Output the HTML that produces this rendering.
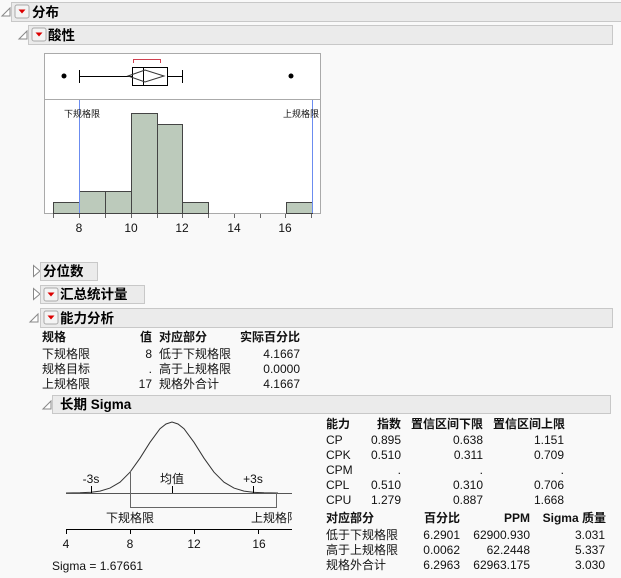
<!DOCTYPE html>
<html><head><meta charset="utf-8"><style>
html,body{margin:0;padding:0;background:#f9f9f9;width:621px;height:578px;overflow:hidden}
svg{display:block}
text{font-family:"Liberation Sans","Noto Sans CJK SC",sans-serif;font-size:12px;fill:#111}
.h{font-size:13.5px;font-weight:bold;fill:#000}
.b{font-weight:bold}
.s{font-size:9px}
</style></head><body>
<svg width="621" height="578" viewBox="0 0 621 578">
<defs>
<g id="btn"><rect x="0" y="0" width="14" height="13" rx="2" fill="#f4f4f4" stroke="#aaa"/><path d="M3.5 4.5h7l-3.5 4z" fill="#d00"/></g>
<g id="tri"><path d="M0 8L8 0V8z" fill="#fff" stroke="#888" stroke-width="1"/></g>
<g id="rtri"><path d="M0.5 0.5L7 6L0.5 11.5z" fill="#fff" stroke="#888"/></g>
</defs>
<!-- headers -->
<rect x="11.5" y="2.5" width="610" height="19" fill="#ebebeb" stroke="#c8c8c8"/>
<use href="#tri" x="2" y="8"/><use href="#btn" x="15" y="5"/>
<text x="32" y="17" class="h">分布</text>
<rect x="28.5" y="25.5" width="584" height="19" fill="#ebebeb" stroke="#c8c8c8"/>
<use href="#tri" x="19" y="31"/><use href="#btn" x="32" y="28"/>
<text x="48" y="40" class="h">酸性</text>
<!-- plot frame -->
<rect x="44.5" y="53.5" width="276" height="160" fill="#fff" stroke="#aaa"/>
<line x1="44" y1="99.5" x2="321" y2="99.5" stroke="#aaa"/>
<!-- box plot -->
<circle cx="64" cy="76" r="2.5" fill="#000"/><circle cx="291" cy="76" r="2.5" fill="#000"/>
<line x1="79" y1="76.5" x2="132" y2="76.5" stroke="#000"/><line x1="167" y1="76.5" x2="182" y2="76.5" stroke="#000"/>
<line x1="79.5" y1="70" x2="79.5" y2="83" stroke="#000"/><line x1="182.5" y1="70" x2="182.5" y2="83" stroke="#000"/>
<rect x="132.5" y="67.5" width="35" height="18" fill="none" stroke="#000"/>
<line x1="143.5" y1="67" x2="143.5" y2="86" stroke="#000"/>
<path d="M128 76L145 70L164 76L145 82z" fill="none" stroke="#333"/>
<path d="M133.5 63V59.5H160.5V63" fill="none" stroke="#d04050"/>
<!-- histogram -->
<g fill="#bccabb" stroke="#444">
<rect x="53.5" y="202.5" width="26" height="11"/>
<rect x="79.5" y="191.5" width="26" height="22"/>
<rect x="105.5" y="191.5" width="26" height="22"/>
<rect x="131.5" y="113.5" width="26" height="100"/>
<rect x="157.5" y="124.5" width="25" height="89"/>
<rect x="182.5" y="202.5" width="26" height="11"/>
<rect x="286.5" y="202.5" width="26" height="11"/>
</g>
<line x1="79.5" y1="100" x2="79.5" y2="213" stroke="#6b8cf0"/>
<line x1="312.5" y1="100" x2="312.5" y2="213" stroke="#6b8cf0"/>
<text x="64" y="117" class="s">下规格限</text><text x="283" y="117" class="s">上规格限</text>
<g stroke="#666"><line x1="53.5" y1="214" x2="53.5" y2="218"/><line x1="79.5" y1="214" x2="79.5" y2="218"/><line x1="105.5" y1="214" x2="105.5" y2="218"/><line x1="131.5" y1="214" x2="131.5" y2="218"/><line x1="157.5" y1="214" x2="157.5" y2="218"/><line x1="182.5" y1="214" x2="182.5" y2="218"/><line x1="208.5" y1="214" x2="208.5" y2="218"/><line x1="234.5" y1="214" x2="234.5" y2="218"/><line x1="260.5" y1="214" x2="260.5" y2="218"/><line x1="285.5" y1="214" x2="285.5" y2="218"/><line x1="311.5" y1="214" x2="311.5" y2="218"/></g>
<g text-anchor="middle"><text x="79" y="232">8</text><text x="131" y="232">10</text><text x="182" y="232">12</text><text x="234" y="232">14</text><text x="285" y="232">16</text></g>
<!-- collapsed sections -->
<use href="#rtri" x="33" y="265"/>
<rect x="40.5" y="262.5" width="57" height="18" fill="#ebebeb" stroke="#c8c8c8"/>
<text x="43" y="276" class="h">分位数</text>
<use href="#rtri" x="33" y="288"/>
<rect x="40.5" y="285.5" width="104" height="18" fill="#ebebeb" stroke="#c8c8c8"/>
<use href="#btn" x="44" y="288"/><text x="60" y="299" class="h">汇总统计量</text>
<use href="#tri" x="30" y="314"/>
<rect x="40.5" y="308.5" width="572" height="19" fill="#ebebeb" stroke="#c8c8c8"/>
<use href="#btn" x="44" y="311"/><text x="60" y="323" class="h">能力分析</text>
<!-- spec table -->
<text x="42" y="341" class="b">规格</text><text x="152" y="341" class="b" text-anchor="end">值</text><text x="159" y="341" class="b">对应部分</text><text x="300" y="341" class="b" text-anchor="end">实际百分比</text>
<text x="42" y="358">下规格限</text><text x="152" y="358" text-anchor="end">8</text><text x="159" y="358">低于下规格限</text><text x="300" y="358" text-anchor="end">4.1667</text>
<text x="42" y="373">规格目标</text><text x="152" y="373" text-anchor="end">.</text><text x="159" y="373">高于上规格限</text><text x="300" y="373" text-anchor="end">0.0000</text>
<text x="42" y="388">上规格限</text><text x="152" y="388" text-anchor="end">17</text><text x="159" y="388">规格外合计</text><text x="300" y="388" text-anchor="end">4.1667</text>
<!-- long term -->
<use href="#tri" x="43" y="401"/>
<rect x="52.5" y="395.5" width="558" height="18" fill="#ebebeb" stroke="#c8c8c8"/>
<text x="60" y="409" class="h">长期 Sigma</text>
<!-- normal chart -->
<polyline fill="none" stroke="#333" points="66,493 80,492.8 91,492.3 100,491.1 110,488.1 120,482.2 130,472.2 140,458.2 150,442.3 160,428.7 166,424 172,422 178,424 184,428.7 194,442.3 204,458.2 214,472.2 224,482.2 234,488.1 244,491.1 253,492.3 264,492.8 278,493"/>
<line x1="66" y1="493.5" x2="292" y2="493.5" stroke="#555"/>
<line x1="91.5" y1="486" x2="91.5" y2="493" stroke="#000"/><line x1="172.5" y1="486" x2="172.5" y2="493" stroke="#000"/><line x1="253.5" y1="486" x2="253.5" y2="493" stroke="#000"/>
<path d="M130.5 471V507.5H276.5V493" fill="none" stroke="#666"/>
<text x="91" y="483" text-anchor="middle">-3s</text><text x="172" y="483" text-anchor="middle">均值</text><text x="253" y="483" text-anchor="middle">+3s</text>
<text x="130" y="522" text-anchor="middle">下规格限</text>
<svg x="240" y="505" width="52" height="22"><text x="11" y="17">上规格限</text></svg>
<line x1="66" y1="529.5" x2="292" y2="529.5" stroke="#000"/>
<g stroke="#000"><line x1="66.5" y1="529" x2="66.5" y2="534"/><line x1="130.5" y1="529" x2="130.5" y2="534"/><line x1="194.5" y1="529" x2="194.5" y2="534"/><line x1="258.5" y1="529" x2="258.5" y2="534"/></g>
<g text-anchor="middle"><text x="66" y="548">4</text><text x="130" y="548">8</text><text x="194" y="548">12</text><text x="259" y="548">16</text></g>
<text x="52" y="570">Sigma = 1.67661</text>
<!-- right tables -->
<g text-anchor="end">
<text x="326" y="428" class="b" text-anchor="start">能力</text><text x="401" y="428" class="b">指数</text><text x="483" y="428" class="b">置信区间下限</text><text x="565" y="428" class="b">置信区间上限</text>
<text x="326" y="444" text-anchor="start">CP</text><text x="401" y="444">0.895</text><text x="483" y="444">0.638</text><text x="564" y="444">1.151</text>
<text x="326" y="459" text-anchor="start">CPK</text><text x="401" y="459">0.510</text><text x="483" y="459">0.311</text><text x="564" y="459">0.709</text>
<text x="326" y="474" text-anchor="start">CPM</text><text x="401" y="474">.</text><text x="483" y="474">.</text><text x="564" y="474">.</text>
<text x="326" y="489" text-anchor="start">CPL</text><text x="401" y="489">0.510</text><text x="483" y="489">0.310</text><text x="564" y="489">0.706</text>
<text x="326" y="504" text-anchor="start">CPU</text><text x="401" y="504">1.279</text><text x="483" y="504">0.887</text><text x="564" y="504">1.668</text>
<text x="326" y="522" class="b" text-anchor="start">对应部分</text><text x="460" y="522" class="b">百分比</text><text x="530" y="522" class="b">PPM</text><text x="606" y="522" class="b">Sigma 质量</text>
<text x="326" y="539" text-anchor="start">低于下规格限</text><text x="460" y="539">6.2901</text><text x="530" y="539">62900.930</text><text x="605" y="539">3.031</text>
<text x="326" y="554" text-anchor="start">高于上规格限</text><text x="460" y="554">0.0062</text><text x="530" y="554">62.2448</text><text x="605" y="554">5.337</text>
<text x="326" y="569" text-anchor="start">规格外合计</text><text x="460" y="569">6.2963</text><text x="530" y="569">62963.175</text><text x="605" y="569">3.030</text>
</g>
</svg>
</body></html>
